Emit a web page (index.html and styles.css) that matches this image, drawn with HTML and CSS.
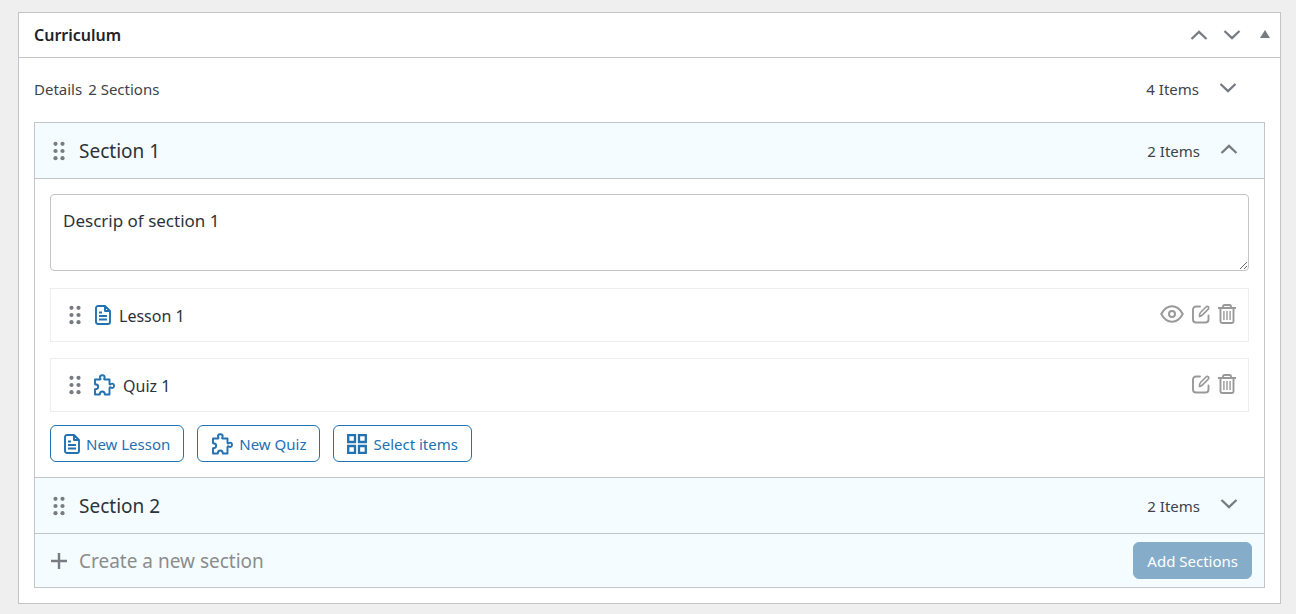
FILE: index.html
```html
<!DOCTYPE html>
<html lang="en">
<head>
    <meta charset="utf-8">
    <title>Curriculum</title>
    <link rel="stylesheet" href="styles.css">
</head>
<body>
    <svg class="sprite" aria-hidden="true">
        <symbol id="up" viewBox="0 0 18 12"><path d="M1.500 10 9 2.800l7.500 7.200" fill="none" stroke="currentColor" stroke-width="2.300"/></symbol>
        <symbol id="down" viewBox="0 0 18 12"><path d="M1.500 2 9 9.200 16.500 2" fill="none" stroke="currentColor" stroke-width="2.300"/></symbol>
        <symbol id="drag" viewBox="0 0 14 20">
            <g fill="currentColor">
                <circle cx="3.500" cy="2.800" r="2.100"/><circle cx="10.500" cy="2.800" r="2.100"/>
                <circle cx="3.500" cy="10" r="2.100"/><circle cx="10.500" cy="10" r="2.100"/>
                <circle cx="3.500" cy="17.200" r="2.100"/><circle cx="10.500" cy="17.200" r="2.100"/>
            </g>
        </symbol>
        <symbol id="lesson" viewBox="0 0 16 20">
            <path d="M3 1h7l5 5v11a2 2 0 0 1-2 2H3a2 2 0 0 1-2-2V3a2 2 0 0 1 2-2z M10 1v5h5 M4 7.500h3 M4 11h8 M4 14.500h8" fill="none" stroke="currentColor" stroke-width="1.900" stroke-linejoin="round"/>
        </symbol>
        <symbol id="quiz" viewBox="0 0 22 22">
            <path d="M2 5.500h4.800c.8 0 .9-.5.500-1.100C6.200 2.600 7.400 1.200 9.300 1.200s3.100 1.400 2 3.200c-.4.600-.3 1.100.5 1.100h4.700v4c0 .9.500 1.200 1.200.7 1.800-1.200 3.300-.2 3.300 1.600s-1.500 2.800-3.300 1.600c-.7-.5-1.200-.2-1.200.7v6.400h-4.700c0-2-.8-3-2.500-3s-2.500 1-2.500 3H2v-5.200c2.100 0 3.200-.8 3.200-2.500S4.100 10.300 2 10.300z" fill="none" stroke="currentColor" stroke-width="1.900" stroke-linejoin="round"/>
        </symbol>
        <symbol id="grid" viewBox="0 0 20 20">
            <path d="M1.200 1.200h6.800v6.800H1.200z M12 1.200h6.800v6.800H12z M1.200 12h6.800v6.800H1.200z M12 12h6.800v6.800H12z" fill="none" stroke="currentColor" stroke-width="2.300"/>
        </symbol>
        <symbol id="eye" viewBox="0 0 24 20">
            <g fill="none" stroke="currentColor" stroke-width="2"><path d="M1.200 10C4 5 7.600 2.200 12 2.200S20 5 22.800 10C20 15 16.400 17.800 12 17.800S4 15 1.200 10z" stroke-linejoin="round"/><circle cx="12" cy="10" r="3"/></g>
        </symbol>
        <symbol id="edit" viewBox="0 0 18 20">
            <g fill="none" stroke="currentColor" stroke-width="1.900" stroke-linecap="round" stroke-linejoin="round"><path d="M8 2.500H4a3 3 0 0 0-3 3v10a3 3 0 0 0 3 3h9.500a3 3 0 0 0 3-3v-4"/><path d="M7.500 12.500c-.2-2 .2-3.300 1.200-4.300l5-5c2-2 4.300.2 2.300 2.200l-5 5c-1 1-2.200 1.700-3.500 2.100z" stroke-width="1.600"/></g>
        </symbol>
        <symbol id="trash" viewBox="0 0 18 20">
            <path d="M0 4h18 M5 4V2.500C5 1.500 5.600 1 6.500 1h5c.9 0 1.500.5 1.500 1.500V4 M2.500 4v13.500c0 1 .6 1.500 1.500 1.500h10c.9 0 1.500-.5 1.500-1.500V4" fill="none" stroke="currentColor" stroke-width="1.900"/>
            <path d="M5.900 7v9 M9 7v9 M12.100 7v9" stroke="currentColor" stroke-width="1.400"/>
        </symbol>
        <symbol id="plus" viewBox="0 0 18 18"><path d="M9 1v16M1 9h16" stroke="currentColor" stroke-width="2.400"/></symbol>
    </svg>

    <main class="postbox">
        <header class="postbox-header">
            <h2>Curriculum</h2>
            <button type="button" class="icon-btn" aria-label="Move up"><svg class="chevron"><use href="#up"/></svg></button>
            <button type="button" class="icon-btn" aria-label="Move down"><svg class="chevron"><use href="#down"/></svg></button>
            <button type="button" class="icon-btn" aria-label="Toggle panel"><span class="triangle"></span></button>
        </header>

        <div class="inside">
            <div class="heading">
                <span>Details</span>
                <span class="sections-count">2 Sections</span>
                <span class="count">4 Items</span>
                <button type="button" class="icon-btn toggle" aria-label="Toggle all sections"><svg class="chevron"><use href="#down"/></svg></button>
            </div>

            <div class="curriculum">
                <section class="section">
                    <div class="section-head">
                        <svg class="drag"><use href="#drag"/></svg>
                        <input type="text" class="title-input" aria-label="Section title" value="Section 1">
                        <span class="count">2 Items</span>
                        <button type="button" class="icon-btn toggle" aria-label="Close section"><svg class="chevron"><use href="#up"/></svg></button>
                    </div>
                    <div class="section-body">
                        <textarea class="description" aria-label="Section description">Descrip of section 1</textarea>
                        <ul class="items">
                            <li class="item">
                                <svg class="drag"><use href="#drag"/></svg>
                                <svg class="lesson-icon"><use href="#lesson"/></svg>
                                <input type="text" class="item-input" aria-label="Lesson title" value="Lesson 1">
                                <a href="#" class="action" aria-label="Preview"><svg class="eye-icon"><use href="#eye"/></svg></a>
                                <a href="#" class="action" aria-label="Edit"><svg class="action-icon"><use href="#edit"/></svg></a>
                                <button type="button" class="icon-btn action" aria-label="Delete"><svg class="action-icon"><use href="#trash"/></svg></button>
                            </li>
                            <li class="item">
                                <svg class="drag"><use href="#drag"/></svg>
                                <svg class="quiz-icon"><use href="#quiz"/></svg>
                                <input type="text" class="item-input" aria-label="Quiz title" value="Quiz 1">
                                <a href="#" class="action" aria-label="Edit"><svg class="action-icon"><use href="#edit"/></svg></a>
                                <button type="button" class="icon-btn action" aria-label="Delete"><svg class="action-icon"><use href="#trash"/></svg></button>
                            </li>
                        </ul>
                        <div class="buttons">
                            <button type="button" class="btn"><svg class="lesson-icon"><use href="#lesson"/></svg>New Lesson</button>
                            <button type="button" class="btn"><svg class="quiz-icon"><use href="#quiz"/></svg>New Quiz</button>
                            <button type="button" class="btn"><svg class="grid-icon"><use href="#grid"/></svg>Select items</button>
                        </div>
                    </div>
                </section>

                <section class="section">
                    <div class="section-head">
                        <svg class="drag"><use href="#drag"/></svg>
                        <input type="text" class="title-input" aria-label="Section title" value="Section 2">
                        <span class="count">2 Items</span>
                        <button type="button" class="icon-btn toggle" aria-label="Open section"><svg class="chevron"><use href="#down"/></svg></button>
                    </div>
                </section>

                <form class="new-section">
                    <svg class="plus-icon"><use href="#plus"/></svg>
                    <input type="text" class="title-input" aria-label="New section title" placeholder="Create a new section">
                    <button type="button" class="btn btn-add">Add Sections</button>
                </form>
            </div>
        </div>
    </main>
</body>
</html>
```
FILE: styles.css
```css
* {
    box-sizing: border-box;
}
body {
    margin: 12px 15px 10px 18px;
    background: #efefef;
    color: #3c434a;
    font: 15px/20px "Noto Sans", "Open Sans", sans-serif;
}
input, textarea, button {
    font: inherit;
    color: inherit;
}
svg {
    display: block;
    flex: none;
}
.sprite {
    position: absolute;
    width: 0;
    height: 0;
}
.postbox {
    background: #fff;
    border: 1px solid #c3c4c7;
}
.postbox-header {
    display: flex;
    align-items: center;
    gap: 15px;
    height: 45px;
    padding: 0 10px 0 15px;
    border-bottom: 1px solid #c3c4c7;
}
.postbox-header h2 {
    flex: 1;
    margin: 0;
    color: #1d2327;
    font-size: 16px;
    font-weight: 600;
}
.icon-btn {
    padding: 0;
    border: 0;
    background: none;
    color: #787c82;
    cursor: pointer;
}
.chevron {
    width: 18px;
    height: 12px;
}
.toggle {
    padding-bottom: 3px;
}
.triangle {
    display: block;
    margin: 0 0 2px 4px;
    border: 5px solid transparent;
    border-top: 0;
    border-bottom: 8px solid #787c82;
}
.inside {
    padding: 0 15px 15px;
}
.heading {
    display: flex;
    align-items: center;
    height: 64px;
    padding: 0 28px 2px 0;
}
.sections-count {
    margin-left: 6px;
}
.count {
    margin-left: auto;
    margin-right: 20px;
}
.curriculum {
    border: 1px solid #c3c4c7;
}
.section {
    border-bottom: 1px solid #c3c4c7;
}
.section-head {
    display: flex;
    align-items: center;
    height: 55px;
    padding: 0 26px 0 17px;
    background: #f4fcff;
}
.drag {
    width: 14px;
    height: 20px;
    color: #787c82;
}
.title-input, .item-input {
    flex: 1;
    min-width: 0;
    padding: 0;
    border: 0;
    background: none;
    color: #2c3338;
}
.title-input {
    margin-left: 13px;
    font-size: 19px;
    line-height: 28px;
}
.title-input::placeholder {
    color: #8c8c8c;
}
.section-body {
    padding: 15px;
    border-top: 1px solid #c3c4c7;
}
.description {
    display: block;
    width: 100%;
    height: 77px;
    padding: 12px;
    border: 1px solid #c3c4c7;
    border-radius: 4px;
    color: #2c3338;
    font-size: 17px;
    line-height: 28px;
    resize: vertical;
}
.items {
    margin: 17px 0 13px;
    padding: 0;
    list-style: none;
}
.item {
    display: flex;
    align-items: center;
    height: 54px;
    padding: 0 12px 0 17px;
    border: 1px solid #eee;
}
.item + .item {
    margin-top: 16px;
}
.item .lesson-icon {
    margin-left: 13px;
}
.item .quiz-icon {
    margin-left: 11px;
}
.item-input {
    margin-left: 8px;
    padding-top: 2px;
    font-size: 16px;
    line-height: 24px;
}
.action {
    margin-left: 8px;
    padding-bottom: 2px;
    color: #999;
}
.lesson-icon {
    width: 16px;
    height: 20px;
    color: #2271b1;
}
.quiz-icon {
    width: 22px;
    height: 22px;
    color: #2271b1;
}
.grid-icon {
    width: 20px;
    height: 20px;
}
.eye-icon {
    width: 24px;
    height: 20px;
}
.action-icon {
    width: 18px;
    height: 20px;
}
.buttons {
    display: flex;
    gap: 13px;
}
.btn {
    display: flex;
    align-items: center;
    gap: 6px;
    height: 37px;
    padding: 0 13px;
    border: 1px solid #2271b1;
    border-radius: 6px;
    background: #fff;
    color: #2271b1;
    cursor: pointer;
}
.btn-add {
    border-color: #85adca;
    background: #85adca;
    color: #fff;
}
.new-section {
    display: flex;
    align-items: center;
    height: 53px;
    padding: 0 12px 0 15px;
    background: #f4fcff;
}
.new-section .title-input {
    margin-left: 11px;
}
.plus-icon {
    width: 18px;
    height: 18px;
    color: #787c82;
}
```
